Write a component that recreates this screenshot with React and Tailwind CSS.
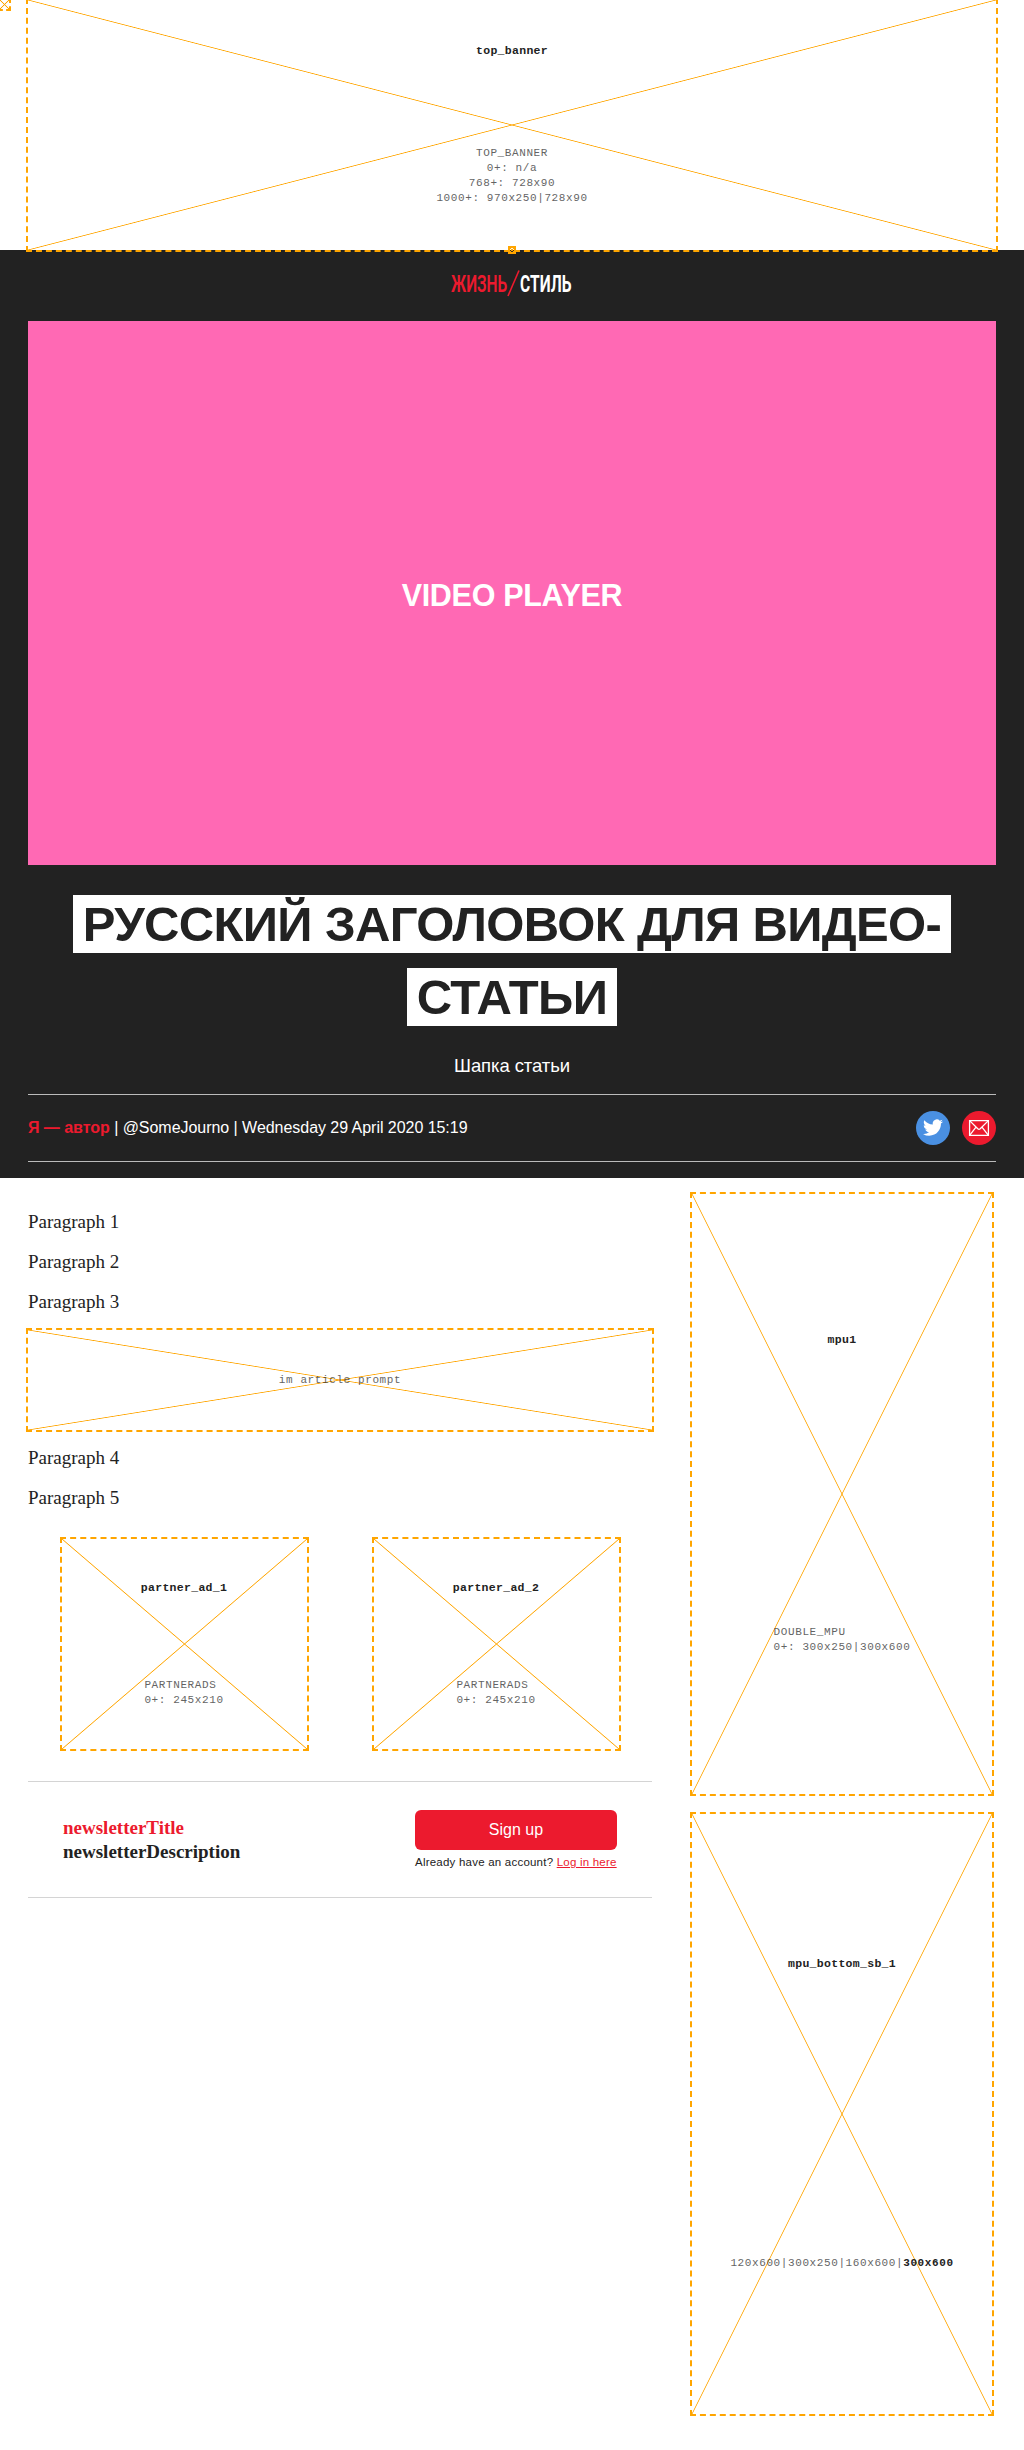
const cross =
  "bg-[linear-gradient(to_top_right,transparent_calc(50%-0.8px),orange_50%,transparent_calc(50%+0.8px)),linear-gradient(to_bottom_right,transparent_calc(50%-0.8px),orange_50%,transparent_calc(50%+0.8px))]";

function Slot({ className, name, children }) {
  return (
    <div
      className={`${cross} flex flex-col items-center justify-around pt-px font-['Liberation_Mono','Courier_New',monospace] text-[11px] leading-[15px] tracking-[0.6px] text-[#222] outline-2 outline-dashed outline-[orange] ${className}`}
    >
      {name && <strong className="-mt-[2px] text-[11.5px] tracking-[0.3px]">{name}</strong>}
      {children}
    </div>
  );
}

function Lines({ items, className = "" }) {
  return (
    <div className={`opacity-70 ${className}`}>
      {items.map((t) => (
        <div key={t}>{t}</div>
      ))}
    </div>
  );
}

function Logo() {
  return (
    <svg width="122" height="28" viewBox="0 0 122 28" fontFamily="Roboto" fontSize="23.5">
      <g transform="scale(.66 1)">
        <text x="0" y="23" fill="#ec1a2e" fontWeight="600" textLength="85" lengthAdjust="spacingAndGlyphs">
          ЖИЗНЬ
        </text>
        <text x="104.5" y="23" fill="#fff" fontWeight="700" textLength="78" lengthAdjust="spacingAndGlyphs">
          СТИЛЬ
        </text>
      </g>
      <path d="M57 27 68 1.5" stroke="#ec1a2e" strokeWidth="1.6" />
    </svg>
  );
}

function Twitter() {
  return (
    <svg width="34" height="34" viewBox="0 0 34 34">
      <circle cx="17" cy="17" r="17" fill="#4a90e2" />
      <path
        transform="translate(7 6.6) scale(.833)"
        fill="#fff"
        d="M23.954 4.569a10 10 0 0 1-2.825.775 4.958 4.958 0 0 0 2.163-2.723c-.951.555-2.005.959-3.127 1.184a4.92 4.92 0 0 0-8.384 4.482C7.691 8.094 4.066 6.13 1.64 3.161a4.822 4.822 0 0 0-.666 2.475c0 1.71.87 3.213 2.188 4.096a4.904 4.904 0 0 1-2.228-.616v.061a4.923 4.923 0 0 0 3.946 4.827 4.996 4.996 0 0 1-2.212.085 4.937 4.937 0 0 0 4.604 3.417 9.868 9.868 0 0 1-6.102 2.105c-.39 0-.779-.023-1.17-.067a13.995 13.995 0 0 0 7.557 2.209c9.054 0 13.999-7.496 13.999-13.986 0-.209 0-.42-.015-.63a9.936 9.936 0 0 0 2.46-2.548z"
      />
    </svg>
  );
}

function Mail() {
  return (
    <svg width="34" height="34" viewBox="0 0 34 34">
      <circle cx="17" cy="17" r="17" fill="#ec1a2e" />
      <g fill="none" stroke="#fff" strokeWidth="1.3">
        <path d="M7.6 9.6h18.8v14.8H7.6z" />
        <path d="m7.6 9.6 8.2 8.2q1.2 1 2.4 0l8.2-8.2M7.6 24.4l6.4-8.2M26.4 24.4 20 16.2" />
      </g>
    </svg>
  );
}

export default function App() {
  return (
    <div className="relative h-[2450px] overflow-hidden bg-white font-['Liberation_Sans',Arial,sans-serif] text-[#222]">
      <Slot className="absolute top-0 left-0 size-[9px]" />
      <Slot name="top_banner" className="relative mx-7 h-[250px]">
        <Lines className="text-center" items={["TOP_BANNER", "0+: n/a", "768+: 728x90", "1000+: 970x250|728x90"]} />
        <Slot className="absolute -bottom-[2px] left-[482px] size-1" />
      </Slot>

      <header className="h-[928px] bg-[#222] px-7 text-white">
        <div className="flex h-[71px] justify-center pt-[19px]">
          <Logo />
        </div>
        <div className="flex h-[544px] items-center justify-center bg-[#ff69b4] pt-[5px] text-[30.5px] font-bold tracking-[-0.3px]">
          VIDEO PLAYER
        </div>
        <h1 className="mt-[23px] text-center text-[49px] leading-[73px] font-bold tracking-[-0.64px]">
          <span className="bg-white box-decoration-clone px-[10px] pt-[2px] pb-[2px] text-[#222]">
            РУССКИЙ ЗАГОЛОВОК ДЛЯ ВИДЕО-
            <br />
            СТАТЬИ
          </span>
        </h1>
        <p className="mt-[9px] h-[51px] text-center text-[18.5px] leading-[46px] tracking-[-0.1px]">Шапка статьи</p>
        <div className="flex h-[68px] items-center justify-between border-y border-[#bbb]">
          <p className="text-base tracking-[-0.04px]">
            <strong className="text-[#ec1a2e]">Я — автор</strong> | @SomeJourno | Wednesday 29 April 2020 15:19
          </p>
          <div className="flex gap-3">
            <Twitter />
            <Mail />
          </div>
        </div>
      </header>

      <div className="flex px-7">
        <main className="w-[624px] pt-[24px]">
          <div className="font-['Liberation_Serif',serif] text-[19px] leading-10">
            <p>Paragraph 1</p>
            <p>Paragraph 2</p>
            <p>Paragraph 3</p>
          </div>
          <Slot className="mt-2 h-[100px]">
            <Lines items={["im article prompt"]} />
          </Slot>
          <div className="mt-2 font-['Liberation_Serif',serif] text-[19px] leading-10">
            <p>Paragraph 4</p>
            <p>Paragraph 5</p>
          </div>
          <div className="mt-[21px] flex justify-center gap-[67px]">
            <Slot name="partner_ad_1" className="h-[210px] w-[245px]">
              <Lines items={["PARTNERADS", "0+: 245x210"]} />
            </Slot>
            <Slot name="partner_ad_2" className="h-[210px] w-[245px]">
              <Lines items={["PARTNERADS", "0+: 245x210"]} />
            </Slot>
          </div>
          <section className="mt-8 flex h-[117px] justify-between border-y border-[#d4d4d4] pr-[35px] pl-[35px] pt-7">
            <div className="pt-[6px] font-['Liberation_Serif',serif] text-[19px] leading-6 font-bold">
              <p className="text-[#ec1a2e]">newsletterTitle</p>
              <p>newsletterDescription</p>
            </div>
            <div className="w-[202px]">
              <button className="h-10 w-full rounded-md bg-[#ec1a2e] text-base text-white">Sign up</button>
              <p className="text-[11.5px] leading-6 tracking-[0.22px] whitespace-nowrap">
                Already have an account? <a className="text-[#ec1a2e] underline">Log in here</a>
              </p>
            </div>
          </section>
        </main>
        <aside className="ml-10 flex flex-col gap-5 pt-4">
          <Slot name="mpu1" className="h-[600px] w-[300px]">
            <Lines items={["DOUBLE_MPU", "0+: 300x250|300x600"]} />
          </Slot>
          <Slot name="mpu_bottom_sb_1" className="h-[600px] w-[300px]">
            <div>
              <span className="opacity-70">120x600|300x250|160x600|</span>
              <strong>300x600</strong>
            </div>
          </Slot>
        </aside>
      </div>
    </div>
  );
}
